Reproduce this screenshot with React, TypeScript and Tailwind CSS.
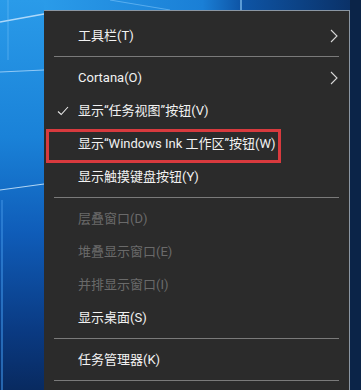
import React from "react";

type Item =
  | { kind: "item"; label: string; check?: boolean; arrow?: boolean; disabled?: boolean }
  | { kind: "sep" };

const items: Item[] = [
  { kind: "item", label: "工具栏(T)", arrow: true },
  { kind: "sep" },
  { kind: "item", label: "Cortana(O)", arrow: true },
  { kind: "item", label: "显示“任务视图”按钮(V)", check: true },
  { kind: "item", label: "显示“Windows Ink 工作区”按钮(W)" },
  { kind: "item", label: "显示触摸键盘按钮(Y)" },
  { kind: "sep" },
  { kind: "item", label: "层叠窗口(D)", disabled: true },
  { kind: "item", label: "堆叠显示窗口(E)", disabled: true },
  { kind: "item", label: "并排显示窗口(I)", disabled: true },
  { kind: "item", label: "显示桌面(S)" },
  { kind: "sep" },
  { kind: "item", label: "任务管理器(K)" },
  { kind: "sep" },
  { kind: "item", label: "" },
];

function Wallpaper() {
  return (
    <svg className="absolute inset-0" width="361" height="390" viewBox="0 0 361 390">
      <defs>
        <linearGradient id="lg" x1="0" y1="0" x2="0" y2="1">
          <stop offset="0" stopColor="#2a9be9" />
          <stop offset="0.35" stopColor="#1a82d8" />
          <stop offset="0.6" stopColor="#0f5cb8" />
          <stop offset="0.85" stopColor="#0a3a82" />
          <stop offset="1" stopColor="#082a60" />
        </linearGradient>
        <linearGradient id="tg" x1="0" y1="0" x2="1" y2="0">
          <stop offset="0" stopColor="#2a9be9" />
          <stop offset="0.5" stopColor="#1a7fd6" />
          <stop offset="0.62" stopColor="#0e55a6" />
          <stop offset="1" stopColor="#0a2e62" />
        </linearGradient>
      </defs>
      <rect x="0" y="0" width="361" height="390" fill="url(#lg)" />
      <rect x="44" y="0" width="317" height="12" fill="url(#tg)" />
      <rect x="350" y="0" width="11" height="390" fill="#0b2448" />
      <path d="M0 22 L44 14" stroke="#cfe9ff" strokeWidth="1.5" opacity="0.8" />
      <path d="M0 72 L44 70" stroke="#bfe2ff" strokeWidth="1" opacity="0.7" />
      <path d="M0 190 L44 184" stroke="#d8efff" strokeWidth="1.2" opacity="0.8" />
      <path d="M8 0 L8 60" stroke="#8fd0ff" strokeWidth="1" opacity="0.4" />
      <path d="M2 200 L2 390" stroke="#3a8de0" strokeWidth="2" opacity="0.6" />
      <path d="M241 0 L241 10" stroke="#9fd8ff" strokeWidth="1.2" opacity="0.9" />
      <path d="M110 0 L170 10" stroke="#8fd0ff" strokeWidth="1" opacity="0.5" />
    </svg>
  );
}

function Chevron() {
  return (
    <svg width="8" height="14" viewBox="0 0 8 14" className="absolute right-[11px]">
      <path d="M1 1 L7 7 L1 13" fill="none" stroke="#d8d8d8" strokeWidth="1.1" />
    </svg>
  );
}

export default function App() {
  return (
    <div
      className="relative w-[361px] h-[390px] overflow-hidden"
      style={{ fontFamily: 'Roboto, "Noto Sans CJK SC", sans-serif' }}
    >
      <Wallpaper />
      <div className="relative ml-[44px] mt-[10px] w-[306px] h-[400px] bg-[#2b2b2b] border-t border-r border-[#8a96a3] pt-[8px]">
        {items.map((it, i) =>
          it.kind === "sep" ? (
            <div key={i} className="h-[9px] flex items-center pl-[10px] pr-[10px]">
              <div className="h-px w-full bg-[#7a7a7a]" />
            </div>
          ) : (
            <div key={i} className="relative h-[33px] flex items-center pl-[34px]">
              {it.check && (
                <svg width="12" height="10" viewBox="0 0 12 10" className="absolute left-[13px]">
                  <path d="M1 5.5 L4.2 8.5 L11 1" fill="none" stroke="#e8e8e8" strokeWidth="1.1" />
                </svg>
              )}
              <span
                className={`text-[13px] leading-none whitespace-nowrap ${
                  it.disabled ? "text-[#6a6a6a]" : "text-[#f2f2f2]"
                }`}
              >
                {it.label}
              </span>
              {it.arrow && <Chevron />}
            </div>
          )
        )}
        <div className="absolute left-[2px] top-[118px] w-[235px] h-[34px] border-[3px] border-[#d83a3e]" />
      </div>
    </div>
  );
}
